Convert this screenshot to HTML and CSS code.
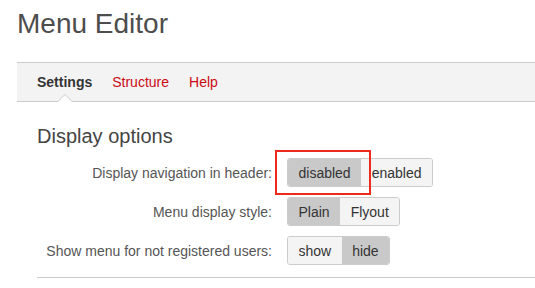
FILE: index.html
```html
<!DOCTYPE html>
<html lang="en">
<head>
    <meta charset="UTF-8">
    <meta name="viewport" content="width=device-width, initial-scale=1.0">
    <title>Menu Editor</title>
    <link rel="stylesheet" href="styles.css">
</head>
<body>
    <div class="page">
        <h1>Menu Editor</h1>

        <ul class="tabs">
            <li class="tab active"><a href="#settings">Settings</a></li>
            <li class="tab"><a href="#structure">Structure</a></li>
            <li class="tab"><a href="#help">Help</a></li>
        </ul>

        <div class="panel">
            <h2>Display options</h2>

            <div class="form-row">
                <label>Display navigation in header:</label>
                <div class="btn-group marked">
                    <button class="btn active">disabled</button>
                    <button class="btn">enabled</button>
                </div>
            </div>
            <div class="form-row">
                <label>Menu display style:</label>
                <div class="btn-group">
                    <button class="btn active">Plain</button>
                    <button class="btn">Flyout</button>
                </div>
            </div>
            <div class="form-row">
                <label>Show menu for not registered users:</label>
                <div class="btn-group">
                    <button class="btn">show</button>
                    <button class="btn active">hide</button>
                </div>
            </div>
        </div>
    </div>
</body>
</html>
```

FILE: styles.css
```css
* {
    margin: 0;
    padding: 0;
    box-sizing: border-box;
}

body {
    font-family: "Liberation Sans", Arial, sans-serif;
    background: #fff;
    color: #555;
    overflow: hidden;
}

.page {
    margin-left: 17px;
}

h1 {
    font-size: 28px;
    font-weight: normal;
    line-height: 32px;
    padding-top: 8px;
    color: #4d4d4d;
}

.tabs {
    list-style: none;
    display: flex;
    margin-top: 22px;
    padding: 0 10px;
    background: #f3f3f3;
    border-top: 1px solid #cccccc;
    border-bottom: 1px solid #cccccc;
}

.tab a {
    display: block;
    position: relative;
    padding: 11px 10px;
    font-size: 14px;
    line-height: 16px;
    color: #cc0a14;
    text-decoration: none;
}

.tab.active a {
    color: #333;
    font-weight: bold;
}

/* little notch under the active tab */
.tab.active a::before,
.tab.active a::after {
    content: "";
    position: absolute;
    left: 50%;
    bottom: -1px;
    width: 0;
    height: 0;
    transform: translateX(-50%);
}

.tab.active a::before {
    border-left: 8px solid transparent;
    border-right: 8px solid transparent;
    border-bottom: 8px solid #cccccc;
}

.tab.active a::after {
    border-left: 7px solid transparent;
    border-right: 7px solid transparent;
    border-bottom: 7px solid #fff;
}

.panel {
    margin-left: 20px;
    padding-bottom: 12px;
    border-bottom: 1px solid #cccccc;
}

h2 {
    font-size: 20px;
    font-weight: normal;
    line-height: 23px;
    margin-top: 23px;
    margin-bottom: 10px;
    color: #444;
}

.form-row {
    display: grid;
    grid-template-columns: 235px auto;
    column-gap: 15px;
    align-items: center;
    justify-items: start;
    margin-bottom: 10px;
}

.form-row:last-child {
    margin-bottom: 0;
}

.form-row label {
    justify-self: end;
    font-size: 14px;
    color: #555;
}

.btn-group {
    display: flex;
    position: relative;
    border: 1px solid #cccccc;
    border-radius: 3px;
}

.btn {
    height: 27px;
    padding: 0 10.5px;
    border: none;
    background: #f4f4f4;
    font-family: inherit;
    font-size: 14px;
    color: #333;
}

.btn:first-child {
    border-radius: 2px 0 0 2px;
}

.btn:last-child {
    border-radius: 0 2px 2px 0;
}

.btn.active {
    background: #c9c9c9;
}

/* red annotation box drawn over the first option */
.btn-group.marked::after {
    content: "";
    position: absolute;
    left: -13px;
    top: -9px;
    width: 92px;
    height: 41px;
    border: 2px solid #ee2a1e;
    pointer-events: none;
}
```
